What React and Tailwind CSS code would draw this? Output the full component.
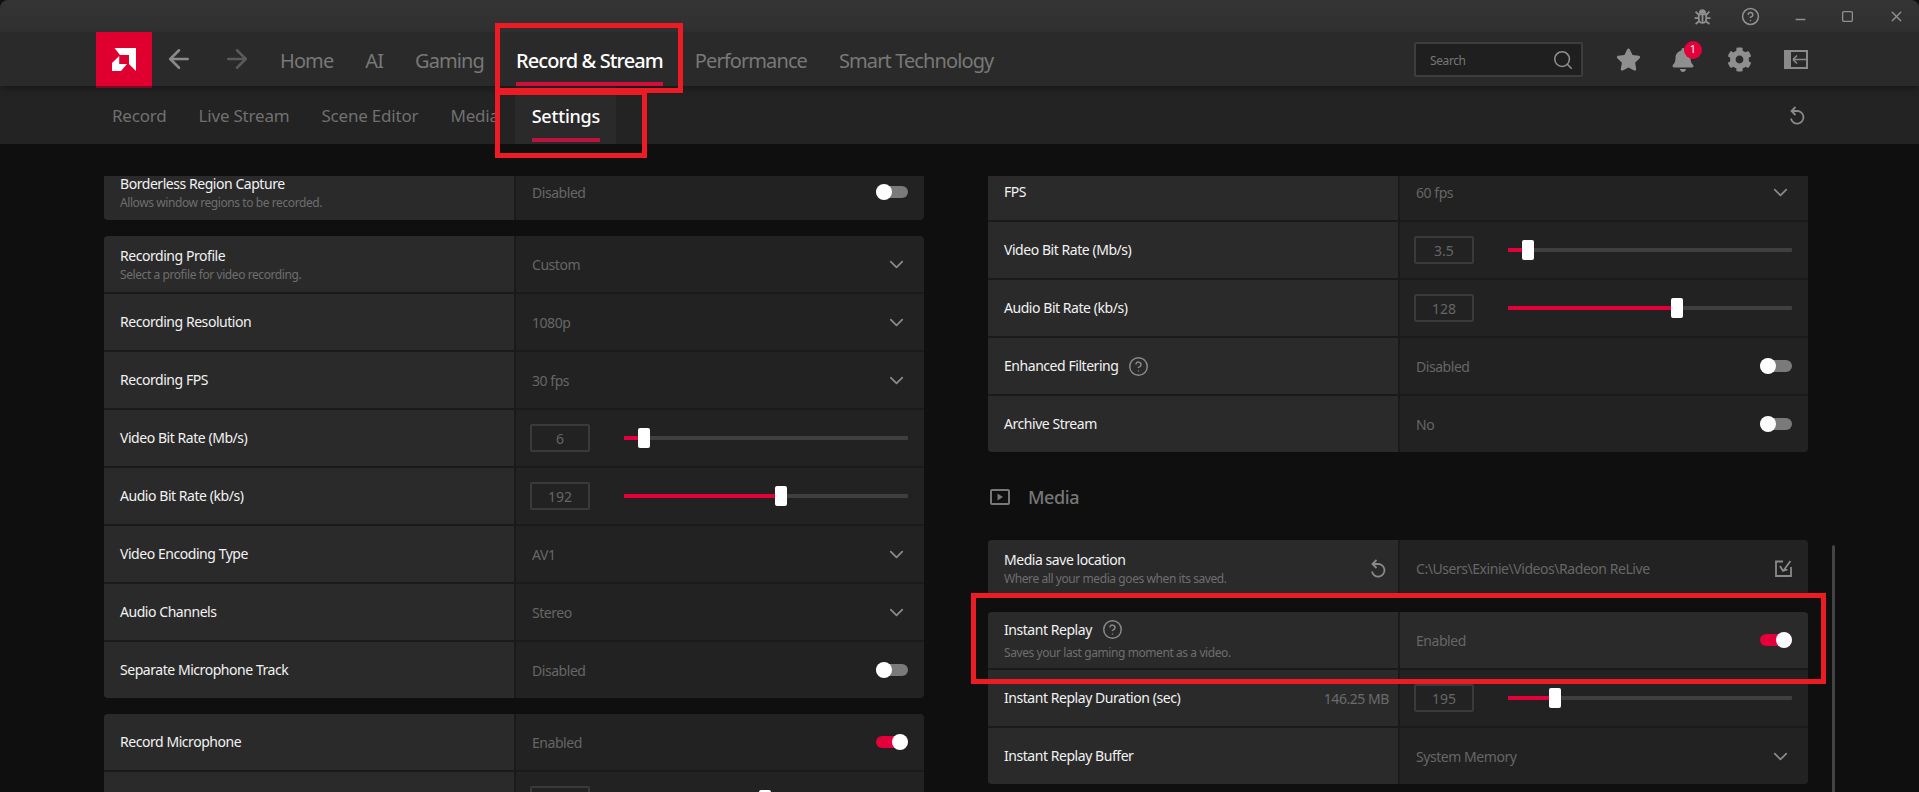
import { ChevronDown, Search, CircleHelp, Minus, Square, X, ArrowLeft, ArrowRight } from 'lucide-react'
import { FaCog, FaStar, FaBell } from 'react-icons/fa'

const navItems = ['Home', 'AI', 'Gaming', 'Record & Stream', 'Performance', 'Smart Technology']
const subItems = ['Record', 'Live Stream', 'Scene Editor', 'Media', 'Settings']

const leftCards = [
  [
    { label: 'Borderless Region Capture', sub: 'Allows window regions to be recorded.', value: 'Disabled', type: 'toggle' },
  ],
  [
    { label: 'Recording Profile', sub: 'Select a profile for video recording.', value: 'Custom', type: 'select' },
    { label: 'Recording Resolution', value: '1080p', type: 'select' },
    { label: 'Recording FPS', value: '30 fps', type: 'select' },
    { label: 'Video Bit Rate (Mb/s)', value: '6', type: 'slider', pos: 20 },
    { label: 'Audio Bit Rate (kb/s)', value: '192', type: 'slider', pos: 157 },
    { label: 'Video Encoding Type', value: 'AV1', type: 'select' },
    { label: 'Audio Channels', value: 'Stereo', type: 'select' },
    { label: 'Separate Microphone Track', value: 'Disabled', type: 'toggle' },
  ],
  [
    { label: 'Record Microphone', value: 'Enabled', type: 'toggle', on: true },
    // row runs off the bottom of the window, only the top of its controls shows
    { label: '', value: '', type: 'slider', pos: 141 },
  ],
]

const rightTop = [
  { label: 'FPS', value: '60 fps', type: 'select' },
  { label: 'Video Bit Rate (Mb/s)', value: '3.5', type: 'slider', pos: 20 },
  { label: 'Audio Bit Rate (kb/s)', value: '128', type: 'slider', pos: 169 },
  { label: 'Enhanced Filtering', value: 'Disabled', type: 'toggle', help: true },
  { label: 'Archive Stream', value: 'No', type: 'toggle' },
]

const mediaCards = [
  [
    { label: 'Media save location', sub: 'Where all your media goes when its saved.', value: 'C:\\Users\\Exinie\\Videos\\Radeon ReLive', type: 'folder', reset: true },
  ],
  [
    { label: 'Instant Replay', sub: 'Saves your last gaming moment as a video.', value: 'Enabled', type: 'toggle', on: true, help: true, active: true },
    { label: 'Instant Replay Duration (sec)', value: '195', type: 'slider', pos: 47, note: '146.25 MB' },
    { label: 'Instant Replay Buffer', value: 'System Memory', type: 'select' },
  ],
]

function AmdLogo() {
  return (
    <svg width="24" height="23" viewBox="0 0 24 23" fill="#fff" className="-ml-[1px]">
      <path d="M2.5 0 H24 V23 L17 16 V7 H8 Z" />
      <path d="M0 15 L7.2 8 V16 H15 L9 23 H0 Z" />
    </svg>
  )
}

function BugIcon() {
  return (
    <svg width="17" height="17" viewBox="0 0 16 16" fill="none" stroke="#8f8f8f" strokeWidth="1.7">
      <path d="M5.5 4.5 a2.5 2.5 0 0 1 5 0 Z" fill="#8f8f8f" />
      <path d="M4.5 6 H11.5 V10.5 a3.5 3.5 0 0 1 -7 0 Z" />
      <path d="M8 6 V14 M1.5 3.5 L4.5 6.5 M14.5 3.5 L11.5 6.5 M0.5 9.5 H4.5 M15.5 9.5 H11.5 M1.5 15 L4.8 12.5 M14.5 15 L11.2 12.5" />
    </svg>
  )
}

function PanelIcon() {
  return (
    <svg width="24" height="19" viewBox="0 0 24 19" fill="none">
      <rect x="0" y="0" width="24" height="19" fill="#8a8a8a" />
      <rect x="7" y="2" width="15" height="15" fill="#2a2a2a" />
      <path d="M9 9.5 H22 M9 9.5 L13 5.5 M9 9.5 L13 13.5" stroke="#8a8a8a" strokeWidth="1.6" />
    </svg>
  )
}

function MediaIcon() {
  return (
    <svg width="20" height="16" viewBox="0 0 20 16" fill="none">
      <rect x="1" y="1" width="18" height="14" rx="1" stroke="#777" strokeWidth="2" />
      <path d="M7.5 4.5 L13 8 L7.5 11.5 Z" fill="#777" />
    </svg>
  )
}

function ResetIcon({ className }) {
  return (
    <svg width="16" height="19" viewBox="0 0 16 19" fill="none" stroke="#8a8a8a" strokeWidth="1.8" className={className}>
      <path d="M6.5 1 L2.5 5 L6.5 9" />
      <path d="M2.5 5 H8 A6.3 6.3 0 1 1 2 12.5" />
    </svg>
  )
}

function FolderIcon() {
  return (
    <svg width="17" height="17" viewBox="0 0 17 17" fill="none" stroke="#8a8a8a" strokeWidth="1.8">
      <path d="M8 1.5 H1 V16 H16 V7" />
      <path d="M15.5 1 L8.5 10.5 M5 6 L8 11 L12.5 9.5" />
    </svg>
  )
}

function Toggle({ on }) {
  return (
    <div className="relative h-4 w-8">
      <div className={`absolute inset-x-0 top-[2px] h-3 rounded-full ${on ? 'bg-[#e4003a]' : 'bg-[#7a7a7a]'}`} />
      <div className={`absolute top-0 h-4 w-4 rounded-full bg-white ${on ? 'right-0' : 'left-0'}`} />
    </div>
  )
}

function Slider({ value, pos }) {
  return (
    <div className="-ml-[2px] flex items-center">
      <div className="flex h-7 w-[60px] items-center justify-center rounded-[2px] border-2 border-[#3a3a3a] text-[14px] text-[#666]">
        {value}
      </div>
      <div className="relative ml-[34px] h-1 w-[284px] rounded-[1px] bg-[#3f3f3f]">
        <div className="h-1 bg-[#e4003a]" style={{ width: pos }} />
        <div className="absolute -top-2 h-5 w-3 -translate-x-1/2 rounded-[2px] bg-white" style={{ left: pos }} />
      </div>
    </div>
  )
}

function Row({ row }) {
  return (
    <div className="flex h-14 shrink-0 gap-[2px]">
      <div className="flex w-[410px] items-center justify-between bg-[#2a2a2a] pl-4 pr-[9px]">
        <div className={row.sub ? 'pt-[1px]' : ''}>
          <div className="flex items-center gap-[10px] text-[14px] leading-5 tracking-[-0.45px] text-[#f2f2f2]">
            {row.label}
            {row.help && <CircleHelp size={21} color="#8a8a8a" strokeWidth={1.7} />}
          </div>
          {row.sub && (
            <div className={`text-[12px] leading-[18px] tracking-[-0.42px] text-[#6e6e6e] ${row.help ? 'mt-1' : ''}`}>
              {row.sub}
            </div>
          )}
        </div>
        {row.note && <span className="text-[14px] tracking-[-0.45px] text-[#6a6a6a]">{row.note}</span>}
        {row.reset && <ResetIcon className="mr-[3px]" />}
      </div>
      <div className={`flex flex-1 items-center justify-between pl-4 pr-4 ${row.active ? 'bg-[#2a2a2a]' : 'bg-[#222222]'}`}>
        {row.type === 'slider' ? (
          <Slider value={row.value} pos={row.pos} />
        ) : (
          <>
            <span className="text-[14px] tracking-[-0.45px] text-[#666]">{row.value}</span>
            {row.type === 'toggle' && <Toggle on={row.on} />}
            {row.type === 'select' && <ChevronDown size={23} color="#8a8a8a" strokeWidth={1.8} />}
            {row.type === 'folder' && <FolderIcon />}
          </>
        )}
      </div>
    </div>
  )
}

function Card({ rows }) {
  return (
    <div className="flex flex-col gap-[2px] overflow-hidden rounded-[4px] bg-[#1a1a1a]">
      {rows.map((row, i) => (
        <Row key={i} row={row} />
      ))}
    </div>
  )
}

export default function App() {
  return (
    <main className="relative flex h-[792px] w-[1919px] flex-col overflow-hidden bg-[#0f0f0f] font-['Noto_Sans',sans-serif]">

      {/* Title bar */}
      <div className="flex h-8 shrink-0 items-center justify-end rounded-t-[8px] bg-gradient-to-b from-[#343434] to-[#303030] pr-[14px] text-[#8f8f8f]">
        <BugIcon />
        <CircleHelp size={19} strokeWidth={2} className="ml-[30px] mr-[33px]" />
        <Minus size={15} strokeWidth={2.2} className="mr-[33px] mt-[7px]" />
        <Square size={13} strokeWidth={2.4} className="mr-[34px]" />
        <X size={17} strokeWidth={2} />
      </div>

      {/* Main nav */}
      <div className="relative z-10 flex h-[54px] shrink-0 items-center bg-[#2a2a2a] pl-[96px] shadow-[0_3px_6px_rgba(0,0,0,0.3)]">
        <div className="flex h-[56px] w-14 shrink-0 items-center justify-center self-start border-b-2 border-[#7d0a24] bg-[#e0002f]">
          <AmdLogo />
        </div>
        <ArrowLeft size={30} color="#8a8a8a" strokeWidth={2} className="ml-3" />
        <ArrowRight size={30} color="#5a5a5a" strokeWidth={2} className="ml-7" />
        <div className="ml-7 flex h-full gap-8">
          {navItems.map((item) => {
            const active = item === 'Record & Stream'
            return (
              <div
                key={item}
                className={`relative flex items-center pt-1 text-[20px] tracking-[-0.9px] ${active ? 'font-medium text-white' : 'text-[#787878]'}`}
              >
                {item}
                {active && <div className="absolute inset-x-0 bottom-0 h-1 bg-[#d0103a]" />}
              </div>
            )
          })}
        </div>
        <div className="ml-auto mr-[111px] mt-[1px] flex items-center">
          <div className="mr-[33px] flex h-[35px] w-[169px] items-center justify-between rounded-[2px] border-2 border-[#3d3d3d] bg-[#1f1f1f] pl-[14px] pr-[7px]">
            <span className="pt-[2px] text-[12px] tracking-[-0.4px] text-[#777]">Search</span>
            <Search size={22} color="#8f8f8f" strokeWidth={1.7} />
          </div>
          <FaStar size={25} color="#8f8f8f" className="mr-[30px]" />
          <div className="relative mr-[32px]">
            <FaBell size={24} color="#8f8f8f" />
            <div className="absolute -right-[7px] -top-[7px] flex h-[18px] w-[18px] items-center justify-center rounded-full bg-[#e4003a] text-[11px] text-white">
              1
            </div>
          </div>
          <FaCog size={25} color="#8f8f8f" className="mr-[32px]" />
          <PanelIcon />
        </div>
      </div>

      {/* Sub nav */}
      <div className="flex h-[58px] shrink-0 items-stretch bg-[#232323] pl-[112px] pr-[114px]">
        <div className="flex gap-8">
          {subItems.map((item) =>
            item === 'Settings' ? (
              <div key={item} className="-ml-[16px] flex w-[101px] justify-center bg-[#2a2a2a]">
                <div className="relative flex items-center pt-[2px] text-[18px] font-medium tracking-[-0.2px] text-white">
                  {item}
                  <div className="absolute inset-x-0 bottom-[2px] h-1 bg-[#c0123e]" />
                </div>
              </div>
            ) : (
              <div
                key={item}
                className={`flex items-center pt-[2px] text-[17px] tracking-[-0.2px] text-[#707070] ${item === 'Media' ? 'w-[49px]' : ''}`}
              >
                {item}
              </div>
            )
          )}
        </div>
        <ResetIcon className="ml-auto self-center" />
      </div>

      {/* Settings columns */}
      <div className="flex min-h-0 flex-1 gap-16 pl-[104px] pt-8">
        <div className="w-[820px] overflow-hidden">
          <div className="-mt-3 flex flex-col gap-4">
            {leftCards.map((rows, i) => (
              <Card key={i} rows={rows} />
            ))}
          </div>
        </div>
        <div className="w-[820px] overflow-hidden">
          <div className="-mt-3">
            <Card rows={rightTop} />
            <div className="flex h-[88px] items-center gap-[18px] pl-[2px] pt-[2px]">
              <MediaIcon />
              <span className="text-[18px] font-medium tracking-[-0.4px] text-[#777]">Media</span>
            </div>
            <div className="flex flex-col gap-4">
              {mediaCards.map((rows, i) => (
                <Card key={i} rows={rows} />
              ))}
            </div>
          </div>
        </div>
      </div>

      {/* Scrollbar */}
      <div className="absolute bottom-0 left-[1832px] top-[545px] w-[3px] rounded-t-full bg-[#444]" />

      {/* Annotation boxes */}
      <div className="pointer-events-none absolute left-[495px] top-[23px] z-20 h-[70px] w-[188px] border-[5px] border-[#ed1c24]" />
      <div className="pointer-events-none absolute left-[495px] top-[90px] z-20 h-[68px] w-[152px] border-[5px] border-[#ed1c24]" />
      <div className="pointer-events-none absolute left-[971px] top-[593px] z-20 h-[91px] w-[855px] border-[5px] border-[#ed1c24]" />
    </main>
  )
}
